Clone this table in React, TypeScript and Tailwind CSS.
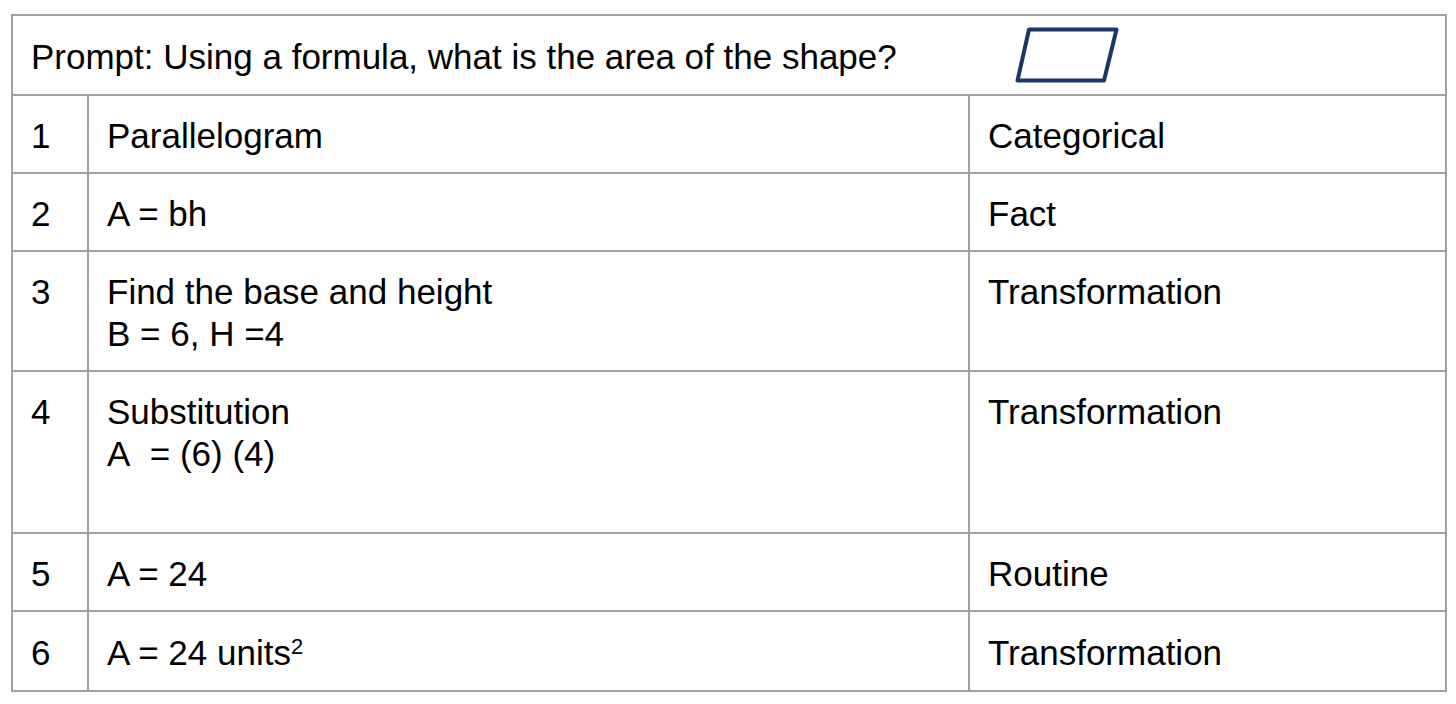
const rows = [
  { n: "1", step: ["Parallelogram"], kind: "Categorical" },
  { n: "2", step: ["A = bh"], kind: "Fact" },
  { n: "3", step: ["Find the base and height", "B = 6, H =4"], kind: "Transformation" },
  { n: "4", step: ["Substitution", "A\u00a0 = (6) (4)", "\u00a0"], kind: "Transformation" },
  { n: "5", step: ["A = 24"], kind: "Routine" },
];

const cell = "border-r-2 border-b-2 border-[#a0a0a0] px-[18px] pt-[19px] pb-[15px] align-top";

export default function App() {
  return (
    <div className="min-h-screen bg-white pl-[11px] pt-[14px] font-['Liberation_Sans',Arial,sans-serif] text-[35px] leading-[42px] text-black">
      <table className="w-[1436px] table-fixed border-separate border-spacing-0 border-l-2 border-t-2 border-[#a0a0a0]">
        <colgroup>
          <col className="w-[76px]" />
          <col className="w-[881px]" />
          <col />
        </colgroup>
        <tbody>
          <tr>
            <td colSpan={3} className={`${cell} pt-[20px] pb-[16px]`}>
              <div className="flex items-center">
                <span className="w-[984px] shrink-0">Prompt: Using a formula, what is the area of the shape?</span>
                <svg width="104" height="56" viewBox="0 0 104 56" className="-my-[7px] -translate-y-[2px]">
                  <polygon
                    points="14,2.5 101.5,2.5 89,53.5 2.5,53.5"
                    fill="none"
                    stroke="#1c3766"
                    strokeWidth="4"
                    strokeLinejoin="round"
                  />
                </svg>
              </div>
            </td>
          </tr>
          {rows.map((r) => (
            <tr key={r.n}>
              <td className={cell}>{r.n}</td>
              <td className={cell}>
                {r.step.map((line, i) => (
                  <div key={i}>{line}</div>
                ))}
              </td>
              <td className={cell}>{r.kind}</td>
            </tr>
          ))}
          <tr>
            <td className={`${cell} pt-[20px] pb-[16px]`}>6</td>
            <td className={`${cell} pt-[20px] pb-[16px]`}>
              A = 24 units<sup className="text-[22px]">2</sup>
            </td>
            <td className={`${cell} pt-[20px] pb-[16px]`}>Transformation</td>
          </tr>
        </tbody>
      </table>
    </div>
  );
}
